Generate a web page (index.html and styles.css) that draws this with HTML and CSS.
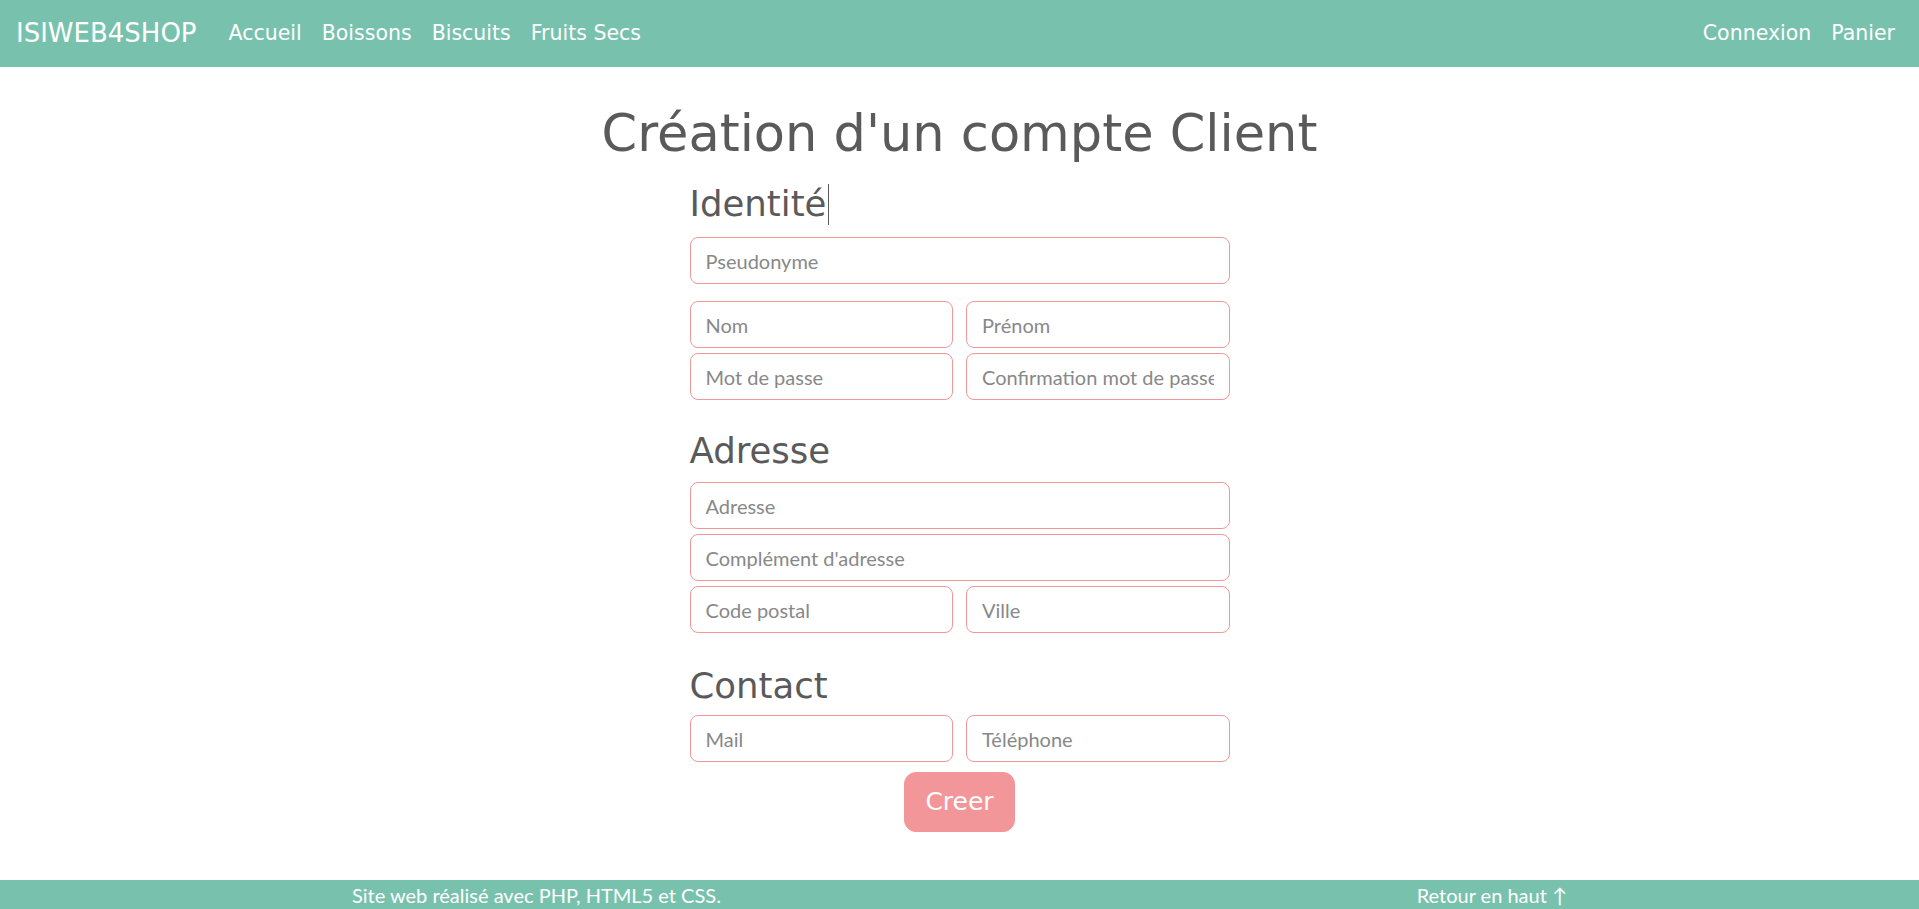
FILE: index.html
```html
<!DOCTYPE html>
<html lang="fr">
<head>
<meta charset="utf-8">
<title>Création d'un compte Client - ISIWEB4SHOP</title>
<link rel="stylesheet" href="styles.css">
</head>
<body>
<nav class="navbar">
  <a class="brand" href="#">ISIWEB4SHOP</a>
  <ul class="nav">
    <li><a class="nav-link" href="#">Accueil</a></li>
    <li><a class="nav-link" href="#">Boissons</a></li>
    <li><a class="nav-link" href="#">Biscuits</a></li>
    <li><a class="nav-link" href="#">Fruits Secs</a></li>
  </ul>
  <ul class="nav nav-right">
    <li><a class="nav-link" href="#">Connexion</a></li>
    <li><a class="nav-link" href="#">Panier</a></li>
  </ul>
</nav>
<main class="main">
  <h1 class="title">Création d'un compte Client</h1>
  <form class="form">
    <section class="section section-identite">
      <h3 class="section-title">Identité<span class="caret"></span></h3>
      <input class="field" type="text" placeholder="Pseudonyme">
      <div class="pair pair-spaced">
        <input class="field" type="text" placeholder="Nom">
        <input class="field" type="text" placeholder="Prénom">
      </div>
      <div class="pair">
        <input class="field" type="password" placeholder="Mot de passe">
        <input class="field" type="password" placeholder="Confirmation mot de passe">
      </div>
    </section>
    <section class="section section-adresse">
      <h3 class="section-title">Adresse</h3>
      <input class="field" type="text" placeholder="Adresse">
      <input class="field" type="text" placeholder="Complément d'adresse">
      <div class="pair">
        <input class="field" type="text" placeholder="Code postal">
        <input class="field" type="text" placeholder="Ville">
      </div>
    </section>
    <section class="section section-contact">
      <h3 class="section-title">Contact</h3>
      <div class="pair">
        <input class="field" type="email" placeholder="Mail">
        <input class="field" type="tel" placeholder="Téléphone">
      </div>
    </section>
    <div class="actions">
      <button class="btn" type="button">Creer</button>
    </div>
  </form>
</main>
<footer class="footer">
  <span class="footer-text">Site web réalisé avec PHP, HTML5 et CSS.</span>
  <a class="footer-link" href="#">Retour en haut ↑</a>
</footer>
</body>
</html>
```
FILE: styles.css
```css
html {
  overflow: hidden;
}
body {
  margin: 0;
  height: 909px;
  display: flex;
  flex-direction: column;
  font-family: "Lato", "Noto Sans", sans-serif;
  font-size: 20px;
  color: #888;
  background: #fff;
}
a {
  text-decoration: none;
}

/* Navbar */
.navbar {
  height: 67px;
  flex: none;
  display: flex;
  align-items: center;
  padding: 0 14px 0 16px;
  background: #78c2ad;
  font-family: "DejaVu Sans", sans-serif;
}
.brand {
  color: #fff;
  font-size: 26px;
  margin-right: 22px;
  margin-top: -2px;
}
.nav {
  list-style: none;
  margin: -2px 0 0;
  padding: 0;
  display: flex;
}
.nav-right {
  margin-left: auto;
}
.nav-link {
  display: block;
  padding: 0 10px;
  color: #fff;
  font-size: 20.5px;
}

/* Main */
.main {
  flex: 1;
  padding-top: 37px;
}
.title {
  margin: 0;
  text-align: center;
  font-family: "DejaVu Sans", sans-serif;
  font-weight: 400;
  font-size: 51px;
  line-height: 60px;
  color: #5a5a5a;
}
.form {
  width: 540px;
  margin: 19px auto 0;
}
.section {
  display: flex;
  flex-direction: column;
  gap: 5px;
}
.section-title {
  margin: 0 0 7px;
  font-family: "DejaVu Sans", sans-serif;
  font-weight: 400;
  font-size: 35.5px;
  line-height: 42px;
  color: #5a5a5a;
}
.caret {
  display: inline-block;
  width: 1px;
  height: 41px;
  margin-left: 2px;
  vertical-align: top;
  margin-top: 1px;
  background: #5a5a5a;
}
.section-adresse {
  margin-top: 30px;
}
.section-adresse .section-title {
  margin-bottom: 5px;
}
.section-contact {
  margin-top: 32px;
}
.section-contact .section-title {
  margin-bottom: 3px;
}
.pair {
  display: grid;
  grid-template-columns: 1fr 1fr;
  gap: 13px;
}
.pair-spaced {
  margin-top: 12px;
}
.field {
  box-sizing: border-box;
  width: 100%;
  height: 47px;
  margin: 0;
  padding: 0 15px;
  border: 1px solid #f3969a;
  border-radius: 8px;
  background: #fff;
  font-family: "Lato", "Noto Sans", sans-serif;
  font-size: 20px;
  color: #5a5a5a;
  outline: none;
}
.field::placeholder {
  color: #888;
  opacity: 1;
}
.actions {
  margin-top: 10px;
  display: flex;
  justify-content: center;
}
.btn {
  padding: 10px 20px;
  border: 1px solid #f3969a;
  border-radius: 12px;
  background: #f3969a;
  color: #fff;
  font-family: "DejaVu Sans", sans-serif;
  font-size: 25px;
  line-height: 37.5px;
  cursor: pointer;
}

/* Footer */
.footer {
  flex: none;
  height: 29px;
  overflow: hidden;
  display: flex;
  justify-content: space-between;
  padding: 0 352px;
  background: #78c2ad;
  color: #fff;
  line-height: 30px;
}
.footer-link {
  color: #fff;
}
```
